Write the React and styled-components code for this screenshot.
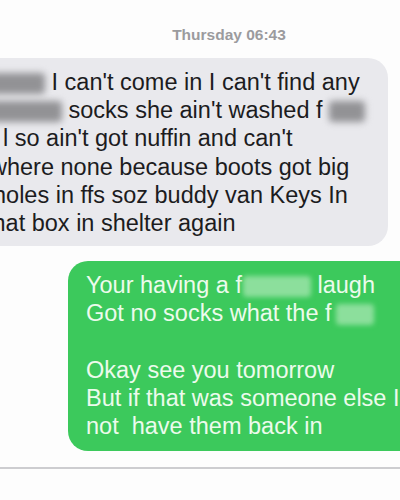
import React from "react";
import styled, { createGlobalStyle } from "styled-components";

const GlobalStyle = createGlobalStyle`
  html, body {
    margin: 0;
    padding: 0;
    background: #ffffff;
    overflow: hidden;
  }
  * { box-sizing: border-box; }
`;

const Page = styled.div`
  width: 400px;
  height: 500px;
  overflow: hidden;
  display: flex;
  flex-direction: column;
  padding-top: 26px;
  background: #fdfdfd;
  font-family: "Liberation Sans", Arial, sans-serif;
`;

const Timestamp = styled.div`
  font-size: 15.5px;
  line-height: 18px;
  font-weight: bold;
  color: #9b9b9e;
  text-align: center;
  padding-left: 58px;
  margin-bottom: 14px;
`;

const Bubble = styled.div`
  display: flex;
  flex-direction: column;
  font-size: 23.5px;
  line-height: 28.2px;
  border-radius: 20px;
  flex-shrink: 0;
  background: ${(p) => (p.$out ? "#3cc95c" : "#e9e9ed")};
  color: ${(p) => (p.$out ? "#ecfbec" : "#1c1c1e")};
  margin-left: ${(p) => (p.$out ? "68px" : "-30px")};
  width: ${(p) => (p.$out ? "360px" : "418px")};
  padding: ${(p) => (p.$out ? "10px 18px 11px 18px" : "10px 20px 9px 20px")};
  margin-bottom: ${(p) => (p.$out ? "16px" : "15px")};
`;

const Line = styled.div`
  white-space: pre;
  height: 28.2px;
  margin-left: ${(p) => p.$shift || 0}px;
`;

const Blur = styled.span`
  display: inline-block;
  width: ${(p) => p.$w}px;
  height: 21px;
  margin-left: ${(p) => p.$gap || 0}px;
  vertical-align: -4px;
  border-radius: 4px;
  background: ${(p) => (p.$light ? "#8cdf9c" : "#929295")};
  filter: blur(${(p) => (p.$light ? 2.5 : 3.5)}px);
`;

const Divider = styled.div`
  height: 1.5px;
  background: #cdcdd0;
  flex-shrink: 0;
`;

export default function App() {
  return (
    <>
      <GlobalStyle />
      <Page>
        <Timestamp>Thursday 06:43</Timestamp>
        <Bubble>
          <Line>
            <Blur $w={55} /> I can't come in I can't find any
          </Line>
          <Line>
            <Blur $w={72} /> socks she ain't washed f<Blur $w={36} $gap={6} />
          </Line>
          <Line $shift={13}>l so ain't got nuffin and can't</Line>
          <Line>where none because boots got big</Line>
          <Line $shift={3}>holes in ffs soz buddy van Keys In</Line>
          <Line $shift={-4}>that box in shelter again</Line>
        </Bubble>
        <Bubble $out>
          <Line>
            Your having a f<Blur $w={68} $light $gap={1} /> laugh
          </Line>
          <Line>
            Got no socks what the f<Blur $w={38} $light $gap={4} />
          </Line>
          <Line> </Line>
          <Line>Okay see you tomorrow</Line>
          <Line>But if that was someone else I would</Line>
          <Line>not  have them back in</Line>
        </Bubble>
        <Divider />
      </Page>
    </>
  );
}
